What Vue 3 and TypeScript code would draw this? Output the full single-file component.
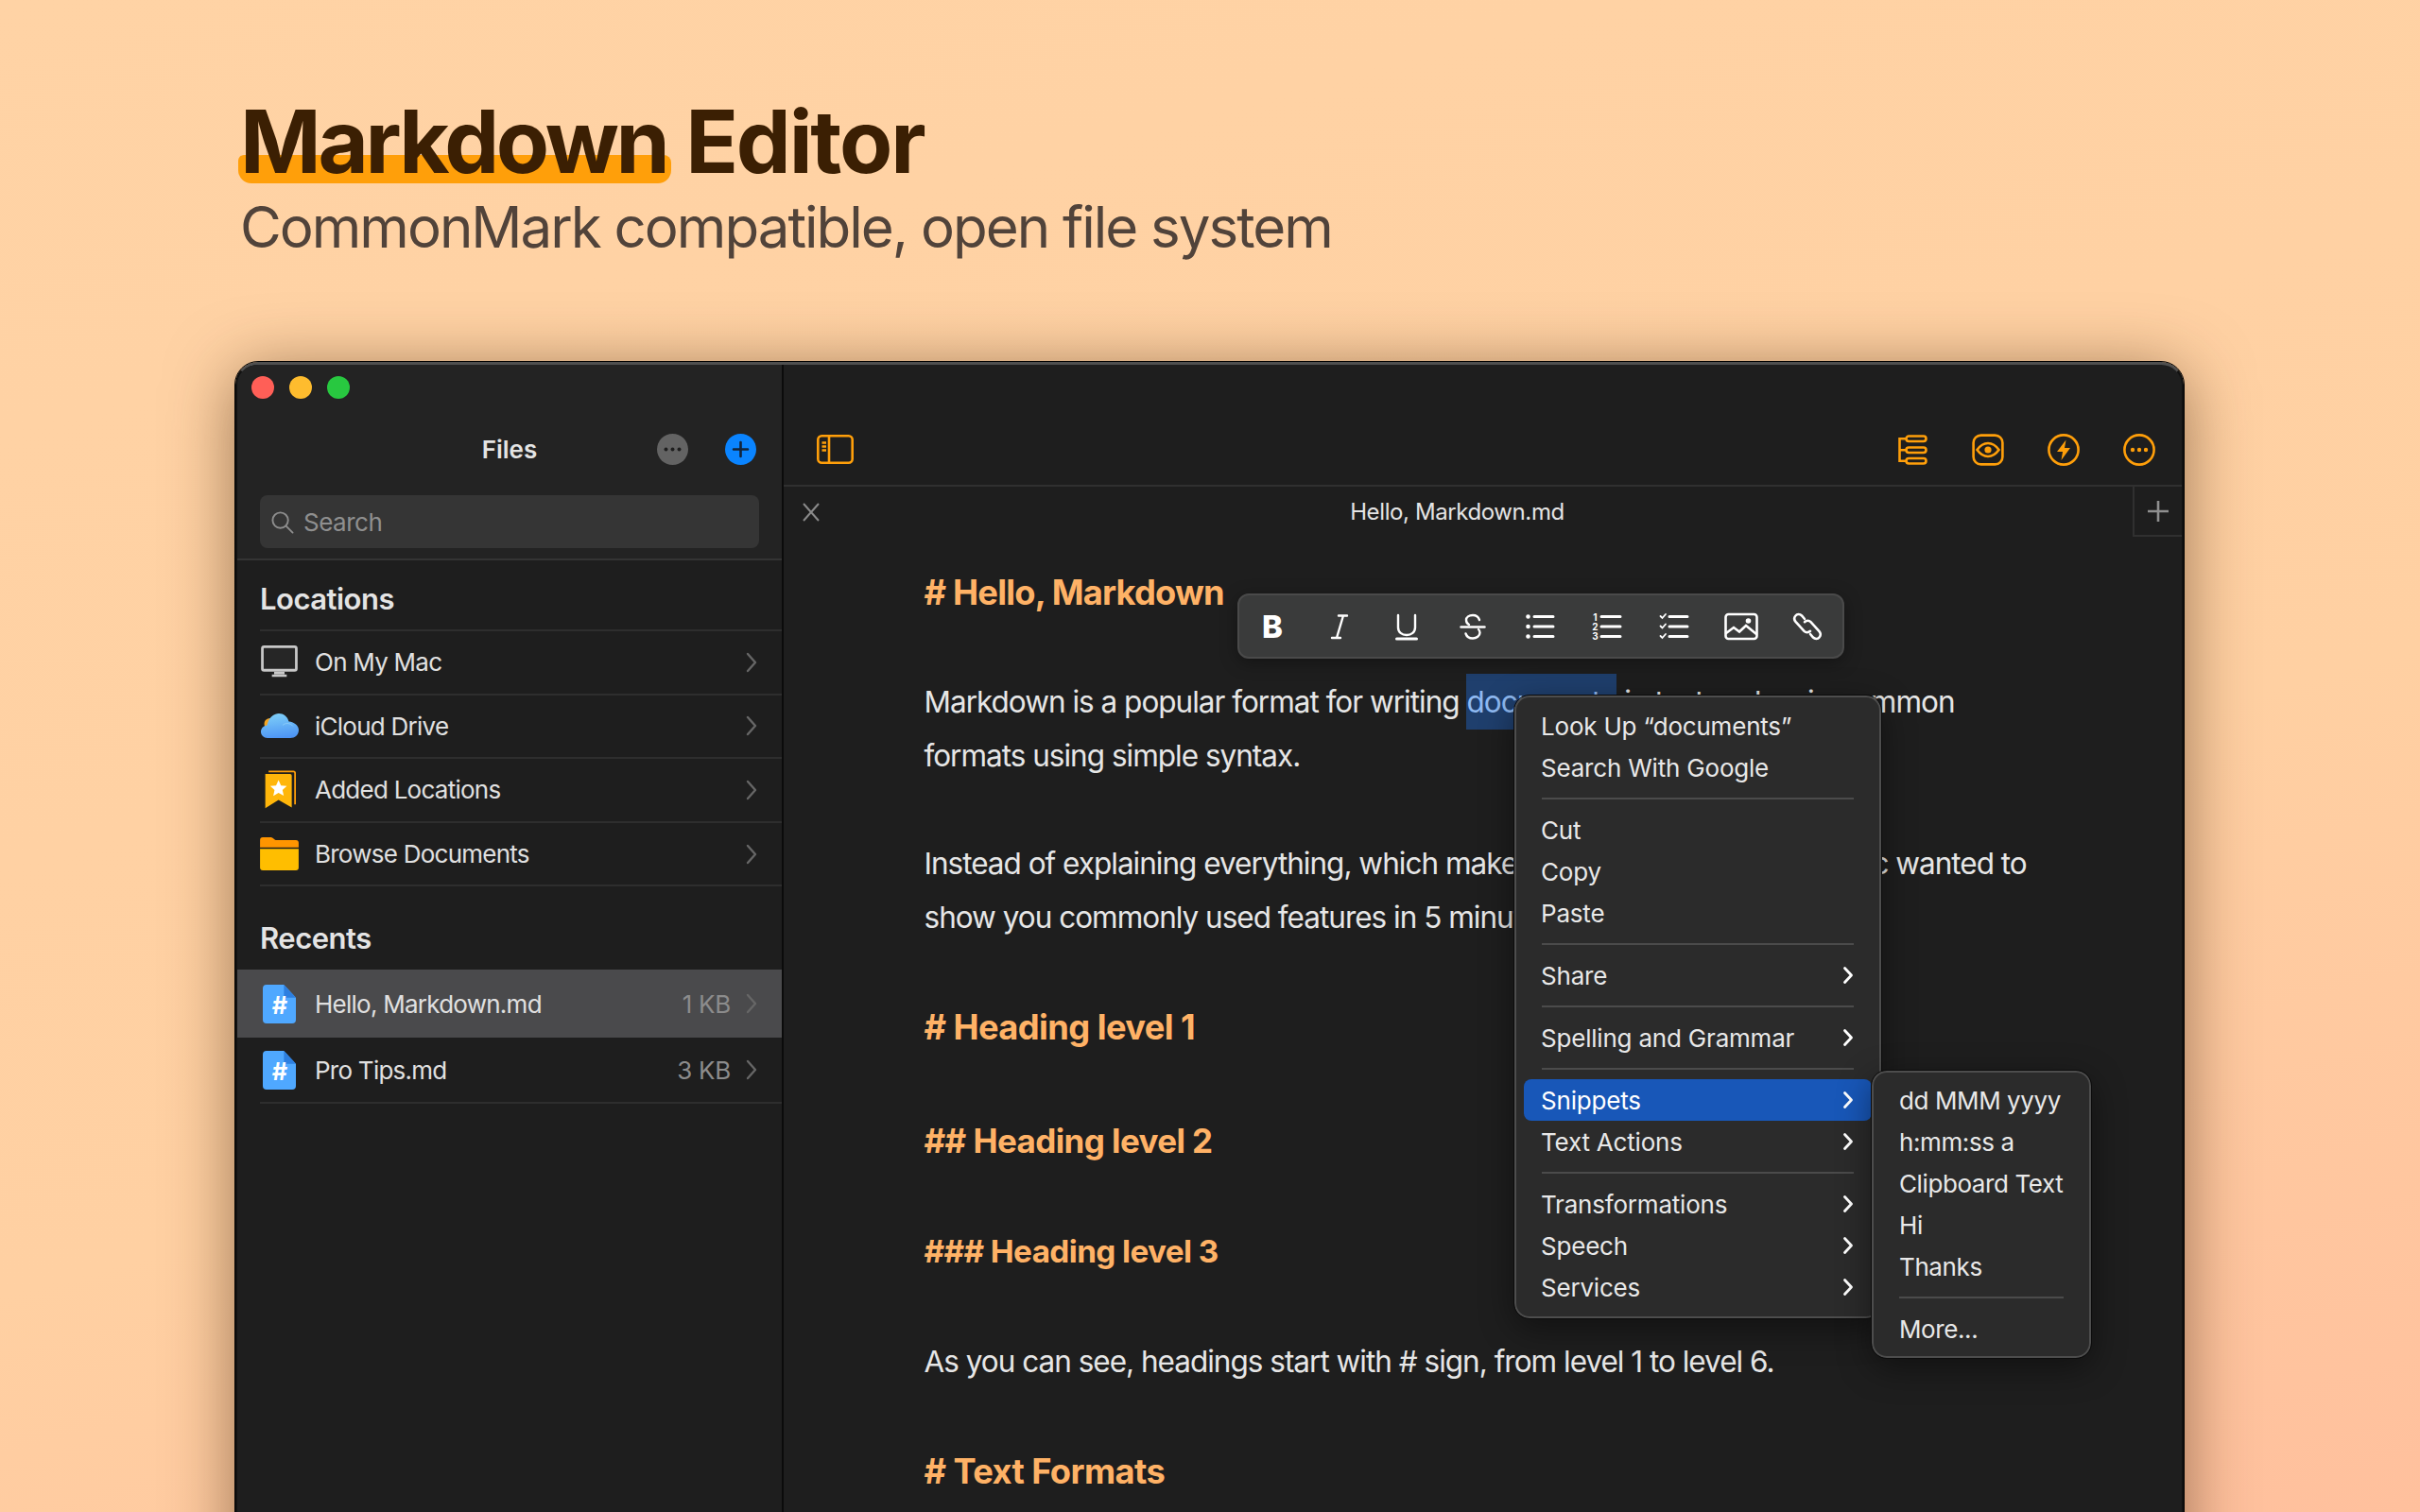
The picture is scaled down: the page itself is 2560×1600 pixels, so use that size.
<script setup lang="ts">
interface FileRow {
  label: string;
  icon: string;
  size?: string;
  active?: boolean;
}

interface MenuItem {
  label: string;
  more?: boolean;
  active?: boolean;
}

const locations: FileRow[] = [
  { label: "On My Mac", icon: "mac" },
  { label: "iCloud Drive", icon: "cloud" },
  { label: "Added Locations", icon: "bookmark" },
  { label: "Browse Documents", icon: "folder" },
];

const recents: FileRow[] = [
  { label: "Hello, Markdown.md", icon: "file", size: "1 KB", active: true },
  { label: "Pro Tips.md", icon: "file", size: "3 KB" },
];

const contextMenu: MenuItem[][] = [
  [{ label: "Look Up “documents”" }, { label: "Search With Google" }],
  [{ label: "Cut" }, { label: "Copy" }, { label: "Paste" }],
  [{ label: "Share", more: true }],
  [{ label: "Spelling and Grammar", more: true }],
  [
    { label: "Snippets", more: true, active: true },
    { label: "Text Actions", more: true },
  ],
  [
    { label: "Transformations", more: true },
    { label: "Speech", more: true },
    { label: "Services", more: true },
  ],
];

const snippetMenu: MenuItem[][] = [
  [
    { label: "dd MMM yyyy" },
    { label: "h:mm:ss a" },
    { label: "Clipboard Text" },
    { label: "Hi" },
    { label: "Thanks" },
  ],
  [{ label: "More..." }],
];
</script>

<template>
  <div class="page">
    <header class="hero">
      <h1 class="title"><span class="mark">Markdown</span> Editor</h1>
      <p class="subtitle">CommonMark compatible, open file system</p>
    </header>

    <div class="window">
      <aside class="sidebar">
        <div class="side-top">
          <div class="lights">
            <i class="light red"></i>
            <i class="light yellow"></i>
            <i class="light green"></i>
          </div>
          <div class="side-head">
            <span class="side-title">Files</span>
            <svg class="round-btn more-btn" viewBox="0 0 33 33">
              <circle cx="16.500" cy="16.500" r="16.500" fill="#636363" />
              <circle cx="9.500" cy="16.500" r="2" fill="#1e1e1e" />
              <circle cx="16.500" cy="16.500" r="2" fill="#1e1e1e" />
              <circle cx="23.500" cy="16.500" r="2" fill="#1e1e1e" />
            </svg>
            <svg class="round-btn add-btn" viewBox="0 0 33 33">
              <circle cx="16.500" cy="16.500" r="16.500" fill="#0a84ff" />
              <path d="M16.500 9v15M9 16.500h15" stroke="#12233a" stroke-width="2.600" stroke-linecap="round" />
            </svg>
          </div>
          <div class="search">
            <svg class="search-icon" viewBox="0 0 26 26" fill="none" stroke="#8d8d8d" stroke-width="2">
              <circle cx="11" cy="11" r="8.500" />
              <path d="M17 17l7.500 7.500" stroke-linecap="round" />
            </svg>
            <span>Search</span>
          </div>
        </div>

        <h2 class="group first">Locations</h2>
        <ul class="rows">
          <li v-for="row in locations" :key="row.label" class="row">
            <span class="row-icon">
              <svg v-if="row.icon === 'mac'" viewBox="0 0 42 38" width="39" height="35">
                <rect x="1.500" y="1.500" width="39" height="27" rx="2" fill="#262626" stroke="#c8c8c8" stroke-width="3" />
                <path d="M15 30h12v3H15zM12.500 33.500h17V36h-17z" fill="#c8c8c8" />
              </svg>
              <svg v-else-if="row.icon === 'cloud'" viewBox="0 0 40 26" width="40" height="26">
                <defs>
                  <linearGradient id="cloudFill" x1="0.300" y1="0" x2="0.500" y2="1">
                    <stop offset="0" stop-color="#7fd0f8" />
                    <stop offset="1" stop-color="#4d94f4" />
                  </linearGradient>
                </defs>
                <circle cx="9.500" cy="11" r="6" fill="#f5a623" />
                <path
                  d="M7 26C3 26 0 23 0 19.500 0 16 2.600 13 6.500 12.600 8 5 13 0 19 0c5 0 9 3 10.500 8.500C35.500 9 40 13 40 17.500c0 5-4 8.500-9 8.500z"
                  fill="url(#cloudFill)"
                />
                <path d="M23 12.500c2-2.500 8-3 11 1" fill="none" stroke="#9fd8fa" stroke-opacity="0.600" stroke-width="1" />
              </svg>
              <svg v-else-if="row.icon === 'bookmark'" viewBox="0 0 40 48" width="35" height="42">
                <path d="M7 1.500h30a2 2 0 0 1 2 2v38" fill="none" stroke="#ff9f0a" stroke-width="2" />
                <path d="M3 4.500h30a2 2 0 0 1 2 2v38.500L19 36 3 46z" fill="#ffb60a" />
                <path d="M19 12l3 6.500 7 .7-5.200 4.700 1.500 7L19 27.300 12.700 31l1.500-7L9 19.200l7-.7z" fill="#fff" />
              </svg>
              <svg v-else-if="row.icon === 'folder'" viewBox="0 0 42 36" width="41" height="35">
                <path d="M0 11V3a3 3 0 0 1 3-3h9c2 0 3 2.500 5 3h22a3 3 0 0 1 3 3v5z" fill="#ff9500" />
                <path d="M0 12.500h42V33a3 3 0 0 1-3 3H3a3 3 0 0 1-3-3z" fill="#ffbe00" />
              </svg>
            </span>
            <span class="row-label">{{ row.label }}</span>
            <svg class="chevron" viewBox="0 0 12 22" fill="none" stroke="#666" stroke-width="2.400">
              <path d="M2 2l8 9-8 9" stroke-linecap="round" stroke-linejoin="round" />
            </svg>
          </li>
        </ul>

        <h2 class="group second">Recents</h2>
        <ul class="rows recents">
          <li v-for="row in recents" :key="row.label" class="row" :class="{ active: row.active }">
            <span class="row-icon">
              <svg viewBox="0 0 36 42" width="35" height="41">
                <path d="M4 0h19l13 14v24a4 4 0 0 1-4 4H4a4 4 0 0 1-4-4V4a4 4 0 0 1 4-4z" fill="#4fa8ff" />
                <path d="M23 0l13 14H25a2 2 0 0 1-2-2z" fill="#2d7fe0" />
                <text x="18" y="32" class="hash">#</text>
              </svg>
            </span>
            <span class="row-label">{{ row.label }}</span>
            <span class="row-size">{{ row.size }}</span>
            <svg class="chevron" viewBox="0 0 12 22" fill="none" stroke="#666" stroke-width="2.400">
              <path d="M2 2l8 9-8 9" stroke-linecap="round" stroke-linejoin="round" />
            </svg>
          </li>
        </ul>
      </aside>

      <main class="editor">
        <div class="toolbar">
          <svg class="tool" width="39" height="31" viewBox="0 0 39 31" fill="none" stroke="#ff9f0a" stroke-width="2.600">
            <rect x="1.300" y="1.300" width="36.400" height="28.400" rx="4" />
            <path d="M13 1.300v28.400M5.500 8.500h4.500M5.500 12.500h4.500M5.500 16.500h4.500" />
          </svg>
          <div class="tool-group">
            <svg class="tool" width="34" height="34" viewBox="0 0 34 34" fill="none" stroke="#ff9f0a" stroke-width="2.600">
              <rect x="10.500" y="2.500" width="21" height="5.500" rx="2.750" />
              <rect x="10.500" y="14.500" width="21" height="5.500" rx="2.750" />
              <rect x="10.500" y="26" width="21" height="5.500" rx="2.750" />
              <path d="M10.500 5.200H3.500v23.500h7M3.500 17.200h7" />
            </svg>
            <svg class="tool" width="34" height="34" viewBox="0 0 34 34" fill="none" stroke="#ff9f0a" stroke-width="2.600">
              <rect x="1.600" y="1.600" width="30.800" height="30.800" rx="8" />
              <path d="M5.500 17C9 12 13 10 17 10s8 2 11.500 7C25 22 21 24 17 24s-8-2-11.500-7z" />
              <circle cx="17" cy="17" r="3.600" fill="#ff9f0a" stroke="none" />
            </svg>
            <svg class="tool" width="34" height="34" viewBox="0 0 34 34" fill="none" stroke="#ff9f0a" stroke-width="2.600">
              <circle cx="17" cy="17" r="15.600" />
              <path d="M19.500 6.500L10 19h6l-1.500 9L24 15h-6z" fill="#ff9f0a" stroke="none" />
            </svg>
            <svg class="tool" width="34" height="34" viewBox="0 0 34 34" fill="none" stroke="#ff9f0a" stroke-width="2.600">
              <circle cx="17" cy="17" r="15.600" />
              <circle cx="10" cy="17" r="2.200" fill="#ff9f0a" stroke="none" />
              <circle cx="17" cy="17" r="2.200" fill="#ff9f0a" stroke="none" />
              <circle cx="24" cy="17" r="2.200" fill="#ff9f0a" stroke="none" />
            </svg>
          </div>
        </div>

        <div class="tabbar">
          <svg class="tab-close" viewBox="0 0 20 20" stroke="#8a8a8a" stroke-width="2">
            <path d="M2 1l16 18M18 1L2 19" />
          </svg>
          <span class="tab-title">Hello, Markdown.md</span>
          <div class="tab-add">
            <svg viewBox="0 0 24 24" width="24" height="24" stroke="#8f8f8f" stroke-width="2.600">
              <path d="M12 1v22M1 12h22" />
            </svg>
          </div>
        </div>

        <article class="doc">
          <h3 class="md-head first-head"># Hello, Markdown</h3>
          <p class="md-para">
            Markdown is a popular format for writing <span class="picked">documents</span> in text and so in common
            <br />formats using simple syntax.
          </p>
          <p class="md-para">
            Instead of explaining everything, which makes this a long and broad topic wanted to
            <br />show you commonly used features in 5 minutes.
          </p>
          <h3 class="md-head section"># Heading level 1</h3>
          <h3 class="md-head section level-2">## Heading level 2</h3>
          <h3 class="md-head section level-3">### Heading level 3</h3>
          <p class="md-para single">As you can see, headings start with # sign, from level 1 to level 6.</p>
          <h3 class="md-head section"># Text Formats</h3>
        </article>

        <div class="format-bar">
          <span class="fmt fmt-b">B</span>
          <svg class="fmt" viewBox="0 0 36 32" fill="none" stroke="#fff" stroke-width="2.400" stroke-linecap="round">
            <path d="M17 4.500h9M10 28h9M22 4.500L15 28" />
          </svg>
          <svg class="fmt" viewBox="0 0 36 32" fill="none" stroke="#fff" stroke-width="2.400" stroke-linecap="round">
            <path d="M9 4v13c0 5 4 8 9 8s9-3 9-8V4" />
            <path d="M7.500 29h21" stroke-width="3" />
          </svg>
          <svg class="fmt" viewBox="0 0 36 32" fill="none" stroke="#fff" stroke-width="2.400" stroke-linecap="round">
            <path d="M25 9c-1-3-4-5-7-5-4 0-7 2-7 5 0 2 1 4 3 5M24 19c1 1 1.500 2.500 1.500 3.500 0 3.500-3.500 6-7.500 6-3.500 0-6.500-2-7.500-5" />
            <path d="M5.500 16.500h25" />
          </svg>
          <svg class="fmt" viewBox="0 0 36 32" fill="none" stroke="#fff" stroke-width="3" stroke-linecap="round">
            <path d="M5.500 5.500h0M5.500 16h0M5.500 26.500h0" stroke-width="4.600" />
            <path d="M12 5.500h20M12 16h20M12 26.500h20" />
          </svg>
          <svg class="fmt" viewBox="0 0 36 32" fill="none" stroke="#fff" stroke-width="3" stroke-linecap="round">
            <text x="5.500" y="9.500" class="fmt-n">1</text>
            <text x="5.500" y="19.500" class="fmt-n">2</text>
            <text x="5.500" y="29.500" class="fmt-n">3</text>
            <path d="M12 5.500h20M12 16h20M12 26.500h20" />
          </svg>
          <svg class="fmt" viewBox="0 0 36 32" fill="none" stroke="#fff" stroke-width="3" stroke-linecap="round">
            <path d="M3.500 5l2 2 3.500-4M3.500 15.500l2 2 3.500-4M3.500 26l2 2 3.500-4" stroke-width="1.800" />
            <path d="M13 5.500h19M13 16h19M13 26.500h19" />
          </svg>
          <svg class="fmt" viewBox="0 0 36 32" fill="none" stroke="#fff" stroke-width="2.600" stroke-linecap="round">
            <rect x="1.500" y="3" width="33" height="26" rx="3" />
            <path d="M2 23l8-6 6 4.500 7-6.500 11 9" />
            <circle cx="25.500" cy="10" r="2.800" fill="#fff" stroke="none" />
          </svg>
          <svg class="fmt" viewBox="0 0 36 32" fill="none" stroke="#fff" stroke-width="2.600" stroke-linecap="round">
            <path d="M15 8l-3-3.500c-2-2-5-1.800-6.500 0-1.800 2-1.500 4.500 0 6.300l9 10c1.800 1.800 4.500 1.800 6.500 0" />
            <path d="M21 24l3 3.500c2 2 5 1.800 6.500 0 1.800-2 1.500-4.500 0-6.300l-9-10c-1.800-1.800-4.500-1.800-6.500 0" />
          </svg>
        </div>

        <div class="menu main-menu">
          <div v-for="(group, i) in contextMenu" :key="i" class="menu-group">
            <div v-for="item in group" :key="item.label" class="menu-item" :class="{ active: item.active }">
              <span>{{ item.label }}</span>
              <svg v-if="item.more" class="menu-arrow" viewBox="0 0 12 20" fill="none" stroke="#fff" stroke-width="2.800">
                <path d="M2.500 2.500l7 7.500-7 7.500" stroke-linecap="round" stroke-linejoin="round" />
              </svg>
            </div>
          </div>
        </div>

        <div class="menu sub-menu">
          <div v-for="(group, i) in snippetMenu" :key="i" class="menu-group">
            <div v-for="item in group" :key="item.label" class="menu-item">
              <span>{{ item.label }}</span>
            </div>
          </div>
        </div>
      </main>
    </div>
  </div>
</template>

<style>
html,
body {
  margin: 0;
  background: #ffd0a2;
}
</style>

<style scoped>
.page {
  position: relative;
  width: 2560px;
  height: 1600px;
  overflow: hidden;
  box-sizing: border-box;
  padding: 104px 0 0 254px;
  background: linear-gradient(165deg, #ffd3a5 0%, #ffd0a2 60%, #ffc09d 100%);
  font-family: Inter, "Liberation Sans", sans-serif;
}

.hero {
  height: 279px;
}
.title {
  margin: 0;
  font-size: 92px;
  line-height: 92px;
  font-weight: 700;
  letter-spacing: -2.200px;
  color: #3b1f03;
}
.mark {
  position: relative;
  z-index: 0;
  letter-spacing: -3.300px;
}
.mark::before {
  content: "";
  position: absolute;
  z-index: -1;
  left: -2px;
  right: -4px;
  top: 70px;
  height: 30px;
  border-radius: 6px 8px 14px 14px;
  background: #ff9f0a;
}
.subtitle {
  margin: 8px 0 0;
  font-size: 60px;
  line-height: 72px;
  letter-spacing: -2px;
  color: #51433a;
}

.window {
  display: flex;
  width: 2061px;
  height: 1340px;
  margin-left: -5px;
  box-sizing: border-box;
  border: 2px solid #111;
  border-top: 3px solid #4f4f4f;
  outline: 1px solid #000;
  border-radius: 24px 24px 0 0;
  overflow: hidden;
  background: #1e1e1e;
  box-shadow: 0 10px 70px rgba(70, 40, 15, 0.55);
  color: #e2e2e2;
}

.sidebar {
  flex: none;
  width: 578px;
  box-sizing: border-box;
  border-right: 2px solid #0b0b0b;
  background: #1e1e1e;
}
.side-top {
  height: 207px;
  box-sizing: border-box;
  border-bottom: 2px solid #343434;
  background: #232323;
}
.lights {
  display: flex;
  gap: 16px;
  padding: 12px 0 0 15px;
}
.light {
  width: 24px;
  height: 24px;
  border-radius: 50%;
}
.red {
  background: #ff5f57;
}
.yellow {
  background: #febc2e;
}
.green {
  background: #28c840;
}
.side-head {
  position: relative;
  display: flex;
  align-items: center;
  justify-content: center;
  height: 34px;
  margin-top: 36px;
}
.side-title {
  font-size: 26px;
  font-weight: 600;
  color: #e4e4e4;
}
.round-btn {
  position: absolute;
  top: 1px;
  width: 33px;
  height: 33px;
}
.more-btn {
  left: 444px;
}
.add-btn {
  left: 516px;
}
.search {
  display: flex;
  align-items: center;
  gap: 10px;
  height: 56px;
  margin: 32px 24px 0 24px;
  padding-left: 11px;
  border-radius: 8px;
  background: #353535;
  font-size: 26px;
  letter-spacing: -0.500px;
  color: #8f8f8f;
}
.search-icon {
  width: 25px;
  height: 25px;
}

.group {
  margin: 0;
  padding-left: 24px;
  font-size: 31px;
  font-weight: 600;
  letter-spacing: -0.500px;
  color: #e4e4e4;
}
.group.first {
  height: 73px;
  line-height: 81px;
}
.group.second {
  height: 88px;
  line-height: 110px;
}

.rows {
  list-style: none;
  margin: 0;
  padding: 0;
}
.row {
  display: flex;
  align-items: center;
  height: 67.600px;
  margin-left: 24px;
  padding-right: 26px;
  border-top: 2px solid #2e2e2e;
  box-sizing: border-box;
  font-size: 26px;
  letter-spacing: -0.750px;
  color: #e0e0e0;
}
.rows:not(.recents) .row:last-child {
  border-bottom: 2px solid #2e2e2e;
  height: 69.600px;
}
.recents .row {
  height: 70px;
}
.recents .row:last-child {
  border-top: none;
  border-bottom: 2px solid #2e2e2e;
}
.row.active {
  height: 72px;
  margin-left: 0;
  padding-left: 24px;
  border-top: none;
  background: #4a4a4c;
}
.row-icon {
  display: flex;
  flex: none;
  align-items: center;
  justify-content: center;
  width: 41px;
  margin-right: 17px;
}
.hash {
  font-size: 26px;
  font-weight: 700;
  text-anchor: middle;
  fill: #fff;
}
.row-label {
  flex: 1;
}
.row-size {
  margin-right: 16px;
  letter-spacing: -0.300px;
  color: #8c8c8c;
}
.chevron {
  flex: none;
  width: 12px;
  height: 22px;
}

.editor {
  position: relative;
  flex: 1;
  min-width: 0;
}
.toolbar {
  display: flex;
  align-items: center;
  justify-content: space-between;
  height: 129px;
  box-sizing: border-box;
  padding: 52px 28.500px 0 35px;
  border-bottom: 2px solid #303030;
}
.tool-group {
  display: flex;
  gap: 46px;
}
.tabbar {
  position: relative;
  display: flex;
  align-items: center;
  justify-content: center;
  height: 53px;
}
.tab-close {
  position: absolute;
  left: 19px;
  top: 17px;
  width: 20px;
  height: 20px;
}
.tab-title {
  margin-right: 54px;
  font-size: 24px;
  letter-spacing: -0.400px;
  color: #e4e4e4;
}
.tab-add {
  position: absolute;
  right: 0;
  top: 0;
  display: flex;
  align-items: center;
  justify-content: center;
  width: 52px;
  height: 53px;
  box-sizing: border-box;
  border-left: 2px solid #303030;
  border-bottom: 2px solid #303030;
}

.doc {
  padding: 29px 0 0 148.500px;
  white-space: nowrap;
}
.md-head {
  margin: 0;
  height: 60px;
  font-size: 36.300px;
  line-height: 60px;
  font-weight: 700;
  letter-spacing: -0.800px;
  color: #ffb266;
}
.md-head.section {
  letter-spacing: -0.600px;
}
.md-head.level-2 {
  font-size: 35px;
}
.md-head.level-3 {
  font-size: 33.300px;
}
.md-para {
  margin: 0;
  font-size: 31.500px;
  line-height: 57px;
  letter-spacing: -1px;
  color: #e6e6e6;
}
.first-head {
  margin-bottom: 57px;
}
.md-para + .md-para {
  margin-top: 57px;
}
.md-para + .md-head {
  margin-top: 58px;
}
.md-head + .md-head {
  margin-top: 57px;
}
.md-head.level-2 {
  margin-top: 60px;
}
.md-head + .md-para.single {
  margin-top: 57.600px;
}
.picked {
  display: inline-block;
  height: 59px;
  line-height: 59px;
  margin: -1px 0;
  padding-right: 2px;
  background: #1f3f6d;
  color: #8fbaf2;
}

.format-bar {
  position: absolute;
  left: 480px;
  top: 242px;
  display: flex;
  gap: 34.800px;
  width: 642px;
  height: 69px;
  box-sizing: border-box;
  align-items: center;
  padding: 0 17px;
  border: 2px solid #4a4a4a;
  border-radius: 12px;
  background: #3a3b3b;
  box-shadow: 0 4px 18px rgba(0, 0, 0, 0.35);
}
.fmt {
  flex: none;
  width: 36px;
  height: 32px;
}
.fmt-b {
  font-size: 33px;
  line-height: 32px;
  font-weight: 800;
  text-align: center;
  color: #fff;
}
.fmt-n {
  font-size: 10px;
  font-weight: 700;
  text-anchor: middle;
  fill: #fff;
  stroke: none;
}

.menu {
  position: absolute;
  box-sizing: border-box;
  border: 2px solid #4d4d4d;
  outline: 1px solid #0c0c0c;
  border-radius: 16px;
  background: #2b2b2b;
  box-shadow: 0 10px 36px rgba(0, 0, 0, 0.45);
  font-size: 26px;
  letter-spacing: -0.200px;
  color: #e8e8e8;
  white-space: nowrap;
}
.main-menu {
  left: 773px;
  top: 350px;
  width: 388px;
  height: 659px;
  padding: 8px 8px 0;
}
.sub-menu {
  left: 1151px;
  top: 747px;
  width: 232px;
  height: 304px;
  padding: 7px 8px 0;
  letter-spacing: -0.400px;
}
.main-menu .menu-item {
  padding: 0 19.500px 0 18px;
}
.menu-group + .menu-group {
  position: relative;
  margin-top: 10px;
  padding-top: 12px;
}
.menu-group + .menu-group::before {
  content: "";
  position: absolute;
  top: 0;
  left: 19px;
  right: 19px;
  height: 2px;
  background: #4b4b4b;
}
.menu-item {
  display: flex;
  align-items: center;
  justify-content: space-between;
  height: 44px;
  padding: 0 19px;
  border-radius: 8px;
}
.menu-item.active {
  background: #1857b8;
  color: #fff;
}
.menu-arrow {
  flex: none;
  width: 12px;
  height: 20px;
}
</style>
